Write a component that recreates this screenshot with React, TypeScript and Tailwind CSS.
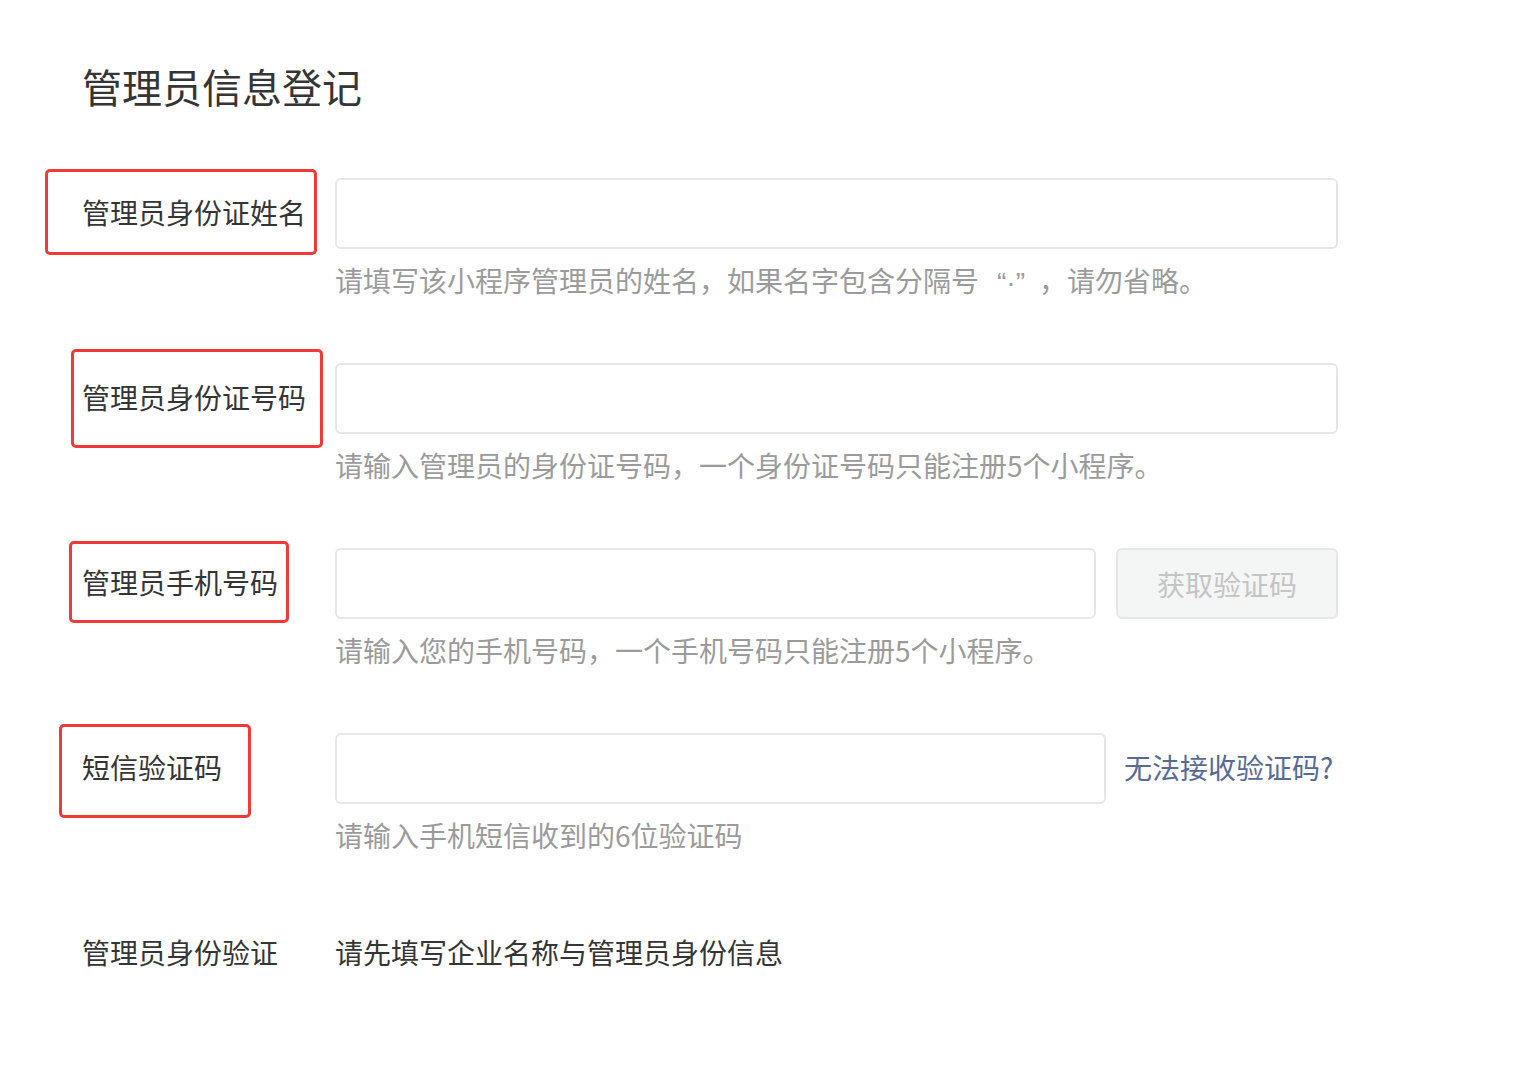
import React from 'react';

type Mark = { left: number; top: number; width: number; height: number };

interface FieldProps {
  label: string;
  hint: React.ReactNode;
  mark: Mark;
  children: React.ReactNode;
}

function Field({ label, hint, mark, children }: FieldProps) {
  return (
    <div className="pb-[63px]">
      <div className="flex items-center h-[71px]">
        <div className="relative w-[253px] shrink-0 h-full flex items-center">
          <span className="text-[28px] leading-[40px] text-[#353535] -mt-[3px]">{label}</span>
          {/* annotation box */}
          <div
            className="absolute border-[3px] border-[#f03a3a] rounded-[5px] pointer-events-none"
            style={{ left: mark.left, top: mark.top, width: mark.width, height: mark.height }}
          />
        </div>
        {children}
      </div>
      <p className="ml-[253px] mt-[11px] h-[40px] overflow-hidden text-[28px] leading-[40px] text-[#9b9b9b]">
        {hint}
      </p>
    </div>
  );
}

const inputCls =
  'h-full border-2 border-[#e6e7e9] rounded-[6px] bg-white outline-none px-4 text-[28px]';

export default function App() {
  return (
    <div
      className="min-h-screen bg-white pl-[82px] pt-[58px]"
      style={{ fontFamily: '"Noto Sans CJK SC", "Noto Sans", sans-serif' }}
    >
      <h1 className="text-[40px] leading-[56px] text-[#353535] font-normal">管理员信息登记</h1>

      <div className="mt-[64px]">
        <Field
          label="管理员身份证姓名"
          hint={
            <>
              请填写该小程序管理员的姓名，如果名字包含分隔号
              <span className="pl-[18px] pr-[14px] leading-none font-['Liberation_Sans',sans-serif]">“·”</span>
              ，请勿省略。
            </>
          }
          mark={{ left: -37, top: -9, width: 272, height: 86 }}
        >
          <input className={`${inputCls} w-[1003px]`} />
        </Field>

        <Field
          label="管理员身份证号码"
          hint="请输入管理员的身份证号码，一个身份证号码只能注册5个小程序。"
          mark={{ left: -11, top: -14, width: 252, height: 99 }}
        >
          <input className={`${inputCls} w-[1003px]`} />
        </Field>

        <Field
          label="管理员手机号码"
          hint="请输入您的手机号码，一个手机号码只能注册5个小程序。"
          mark={{ left: -13, top: -7, width: 220, height: 82 }}
        >
          <input className={`${inputCls} w-[761px]`} />
          <button className="ml-[20px] w-[222px] h-full border-2 border-[#e6e7e9] rounded-[6px] bg-[#f4f5f5] text-[28px] text-[#c4c4c4]">
            获取验证码
          </button>
        </Field>

        <Field
          label="短信验证码"
          hint="请输入手机短信收到的6位验证码"
          mark={{ left: -23, top: -9, width: 192, height: 94 }}
        >
          <input className={`${inputCls} w-[771px]`} />
          <a className="ml-[18px] -mt-[3px] text-[28px] leading-[40px] text-[#576b95] cursor-pointer">无法接收验证码?</a>
        </Field>
      </div>

      <div className="flex items-center mt-[14px] text-[28px] leading-[40px] text-[#353535]">
        <span className="w-[253px] shrink-0">管理员身份验证</span>
        <span>请先填写企业名称与管理员身份信息</span>
      </div>
    </div>
  );
}
